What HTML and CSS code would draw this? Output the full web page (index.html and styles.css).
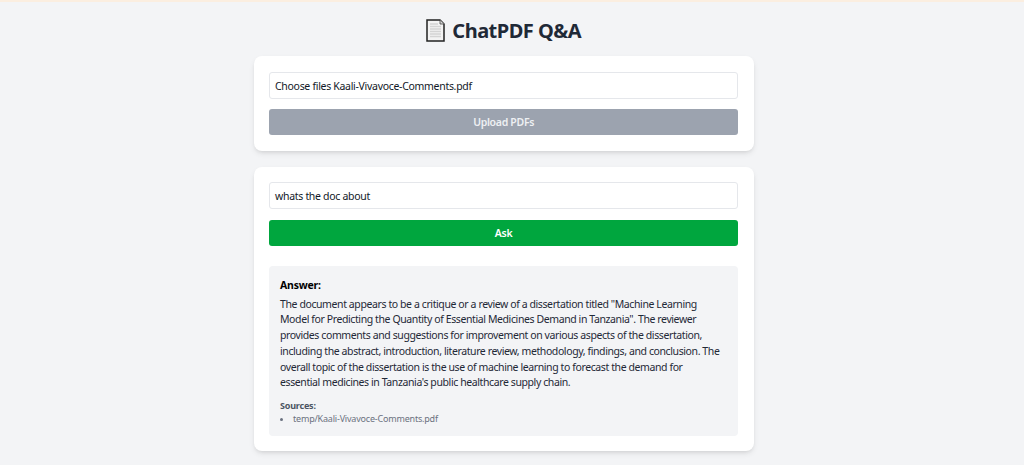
FILE: index.html
```html
<!DOCTYPE html>
<html lang="en">
<head>
    <meta charset="UTF-8">
    <meta name="viewport" content="width=device-width, initial-scale=1.0">
    <title>ChatPDF Q&amp;A</title>
    <link rel="stylesheet" href="styles.css">
</head>
<body>
    <div class="top-strip"></div>
    <div class="page">
        <div class="container">
            <h1 class="title">
                <svg class="doc-icon" viewBox="0 0 19 23" width="19" height="23">
                    <path d="M1 1H14L18 5V22H1Z" fill="#f3f3f3" stroke="#222" stroke-width="1.500"/>
                    <path d="M14 1V5H18" fill="#d8d8d8" stroke="#444" stroke-width="0.800"/>
                    <path d="M4 5H12M4 7.500H15M4 10H15M4 12.500H15M4 15H15M4 17.500H15" stroke="#d4d4d4" stroke-width="1.300"/>
                </svg>
                ChatPDF Q&amp;A
            </h1>

            <div class="card">
                <div class="field">Choose files Kaali-Vivavoce-Comments.pdf</div>
                <button class="btn btn-upload">Upload PDFs</button>
            </div>

            <div class="card card-last">
                <div class="field">whats the doc about</div>
                <button class="btn btn-ask">Ask</button>

                <div class="answer">
                    <div class="answer-label">Answer:</div>
                    <p class="answer-text">The document appears to be a critique or a review of a dissertation titled "Machine Learning Model for Predicting the Quantity of Essential Medicines Demand in Tanzania". The reviewer provides comments and suggestions for improvement on various aspects of the dissertation, including the abstract, introduction, literature review, methodology, findings, and conclusion. The overall topic of the dissertation is the use of machine learning to forecast the demand for essential medicines in Tanzania's public healthcare supply chain.</p>
                    <div class="sources">
                        <div class="sources-label">Sources:</div>
                        <ul class="sources-list">
                            <li>temp/Kaali-Vivavoce-Comments.pdf</li>
                        </ul>
                    </div>
                </div>
            </div>
        </div>
    </div>
</body>
</html>
```

FILE: styles.css
```css
body {
    font-family: "Noto Sans", "Open Sans", sans-serif;
    margin: 0;
    background: #f3f4f6;
    color: #111827;
    height: 465px;
    overflow: hidden;
}
.top-strip {
    height: 2px;
    background: #fbeee0;
}
.page {
    width: 1007.500px;
}
.container {
    width: 499.500px;
    margin: 0 auto;
    padding-top: 14px;
}
.title {
    display: flex;
    align-items: center;
    justify-content: center;
    gap: 7px;
    height: 28px;
    margin: 0 0 12px;
    font-size: 20px;
    font-weight: 700;
    letter-spacing: -0.500px;
    color: #1f2937;
}
.doc-icon {
    flex: none;
}
.card {
    background: white;
    border-radius: 8px;
    padding: 15.750px 15.250px 15.750px 15px;
    margin-bottom: 15.750px;
    box-shadow: 0 3px 6px -1px rgba(0,0,0,0.1), 0 2px 4px -2px rgba(0,0,0,0.1);
}
.card-last {
    padding-bottom: 15px;
}
.field {
    box-sizing: border-box;
    height: 26.750px;
    line-height: 26px;
    padding: 0 5px;
    border: 1px solid #e5e7eb;
    border-radius: 3px;
    font-size: 10.500px;
    letter-spacing: -0.300px;
    color: #111827;
    background: white;
}
.btn {
    display: block;
    box-sizing: border-box;
    width: 100%;
    height: 26px;
    margin-top: 10.500px;
    border: 0;
    border-radius: 3px;
    color: white;
    font-family: inherit;
    font-size: 10.500px;
    font-weight: 600;
    letter-spacing: -0.300px;
}
.btn-upload {
    background: #9ca3af;
    color: #eef0f3;
}
.btn-ask {
    background: #00a63e;
}
.answer {
    margin-top: 20.500px;
    padding: 10.500px 14px 0 11px;
    height: 170px;
    box-sizing: border-box;
    background: #f3f4f6;
    border-radius: 4px;
}
.answer-label {
    font-size: 10.500px;
    font-weight: 700;
    letter-spacing: -0.200px;
    line-height: 16px;
    color: #000;
}
.answer-text {
    margin: 4px 0 0;
    font-size: 10.500px;
    letter-spacing: -0.400px;
    line-height: 15.750px;
    color: #1f2937;
}
.sources {
    margin-top: 8px;
    font-size: 9px;
    letter-spacing: -0.200px;
    line-height: 13px;
}
.sources-label {
    font-weight: 700;
    color: #4b5563;
}
.sources-list {
    margin: 0;
    padding-left: 13px;
    color: #6b7280;
}
```
